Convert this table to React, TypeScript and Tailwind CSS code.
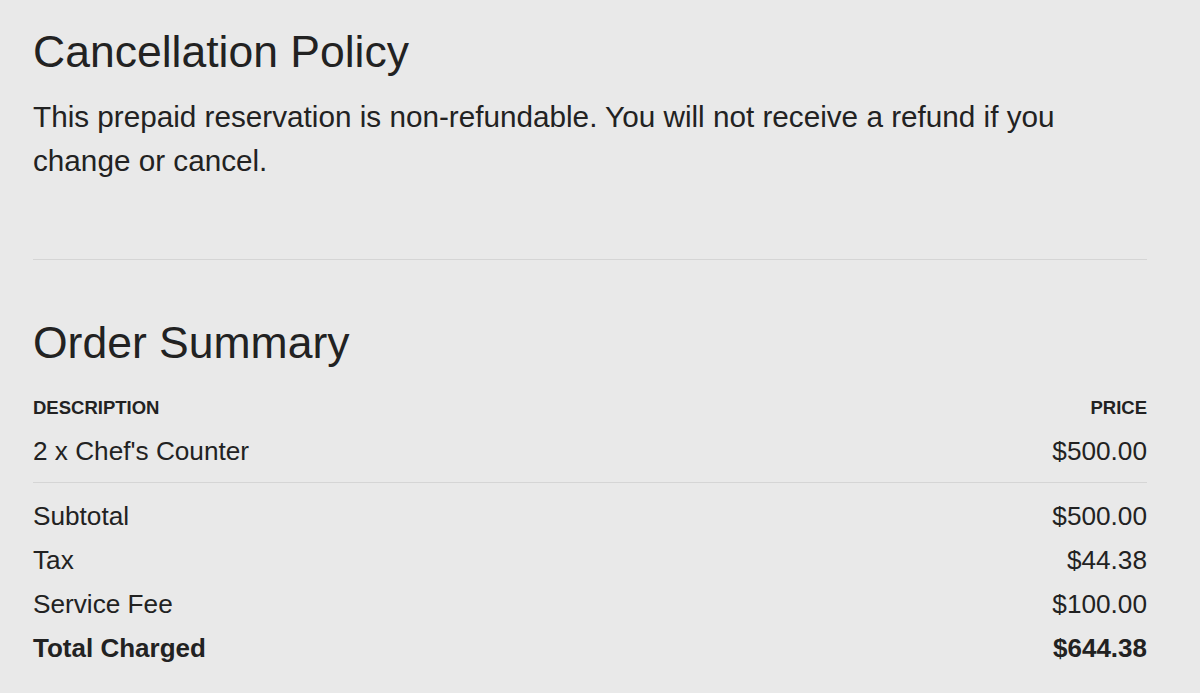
export default function App() {
  const rows = [
    { label: "Subtotal", value: "$500.00" },
    { label: "Tax", value: "$44.38" },
    { label: "Service Fee", value: "$100.00" },
  ];
  return (
    <div
      className="w-[1200px] h-[693px] bg-[#e9e9e9] text-[#222222] overflow-hidden"
      style={{ fontFamily: '"Liberation Sans", Arial, sans-serif' }}
    >
      <div className="ml-[33px] w-[1114px] pt-[26px]">
        <h2 className="text-[44.5px] leading-[52px] font-normal">Cancellation Policy</h2>
        <p className="mt-[17px] text-[29.7px] leading-[44px]">
          This prepaid reservation is non-refundable. You will not receive a refund if you
          <br />
          change or cancel.
        </p>
        <div className="mt-[76px] h-px bg-[#d5d5d5]" />
        <h2 className="mt-[57px] text-[44.5px] leading-[52px] font-normal">Order Summary</h2>
        <div className="mt-[27px] flex justify-between text-[18.5px] leading-[24px] font-bold uppercase">
          <span>Description</span>
          <span>Price</span>
        </div>
        <div className="mt-[9px] flex justify-between text-[26.2px] leading-[44px]">
          <span>2 x Chef's Counter</span>
          <span>$500.00</span>
        </div>
        <div className="mt-[9px] h-px bg-[#d5d5d5]" />
        <div className="mt-[11px]">
          {rows.map((r) => (
            <div key={r.label} className="flex justify-between text-[26.2px] leading-[44px]">
              <span>{r.label}</span>
              <span>{r.value}</span>
            </div>
          ))}
          <div className="flex justify-between text-[26px] leading-[44px] font-bold">
            <span>Total Charged</span>
            <span>$644.38</span>
          </div>
        </div>
      </div>
    </div>
  );
}
